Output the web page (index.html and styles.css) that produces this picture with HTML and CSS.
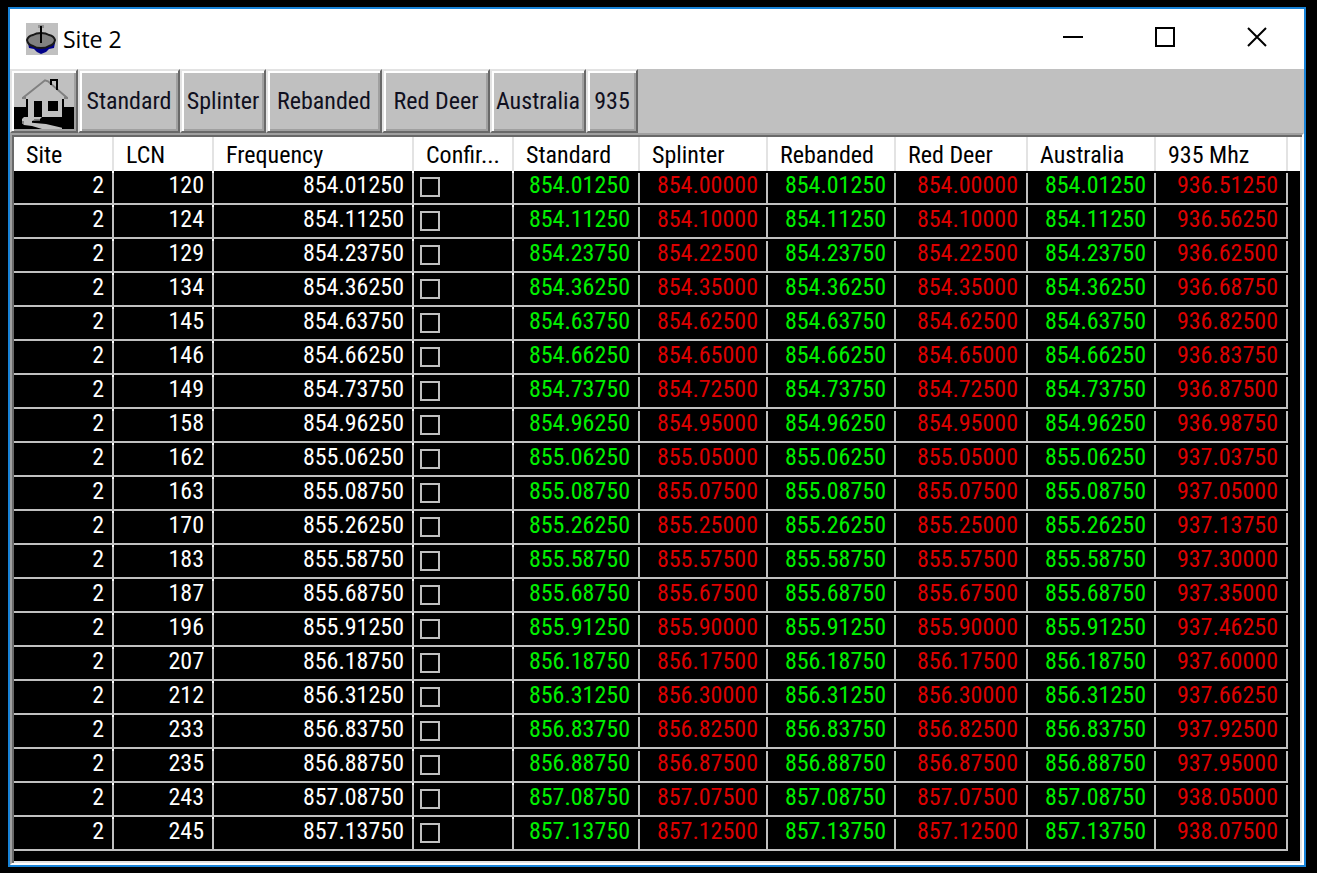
FILE: index.html
```html
<!DOCTYPE html>
<html lang="en">
<head>
<meta charset="utf-8">
<title>Site 2</title>
<link rel="stylesheet" href="styles.css">
</head>
<body>
<main class="window">
  <header class="titlebar">
    <svg class="app-icon" viewBox="0 0 32 32" aria-hidden="true">
      <rect width="32" height="32" fill="#c0c0c0"/>
      <path d="M2 20h27l-1 5-5 1-3 3-5 2-4-2-3-3-5-1z" fill="#000088"/>
      <path d="M1 17Q2 13 7 12q3-2 8-2t8 2q5 1 6 5-1 5-6 6-3 2-8 2t-8-2q-5-1-6-6z" fill="#808080" stroke="#181818" stroke-width="2"/>
      <path d="M12 2h6v3h-6z" fill="#909090"/>
      <path d="M15 3v17" stroke="#000" stroke-width="2"/>
    </svg>
    <h1 class="title">Site 2</h1>
    <div class="controls">
      <button class="control" aria-label="Minimize"><svg viewBox="0 0 20 20"><path d="M0 10h20"/></svg></button>
      <button class="control" aria-label="Maximize"><svg viewBox="0 0 20 20"><path d="M1 1h18v18H1z"/></svg></button>
      <button class="control" aria-label="Close"><svg viewBox="0 0 20 20"><path d="M1 1l18 18M19 1L1 19"/></svg></button>
    </div>
  </header>
  <nav class="toolbar" aria-label="Band plans">
    <button class="tool tool-home" aria-label="Home">
      <svg viewBox="0 0 180 168">
        <rect width="180" height="168" fill="#c0c0c0"/>
        <path d="M0 102h180v66H0z"/>
        <path d="M42 72L96 24l48 48v60H42z" fill="#c0c0c0"/>
        <path d="M36 78h6v24h-6zM144 78h6v24h-6zM60 84h24v48H60zM102 84h30v30h-30z"/>
        <path d="M27 74L93 22l9 3 57 49" fill="none" stroke="#808080" stroke-width="6"/>
        <path d="M24 72h12v6H24zM150 72h12v6h-12z" fill="#808080"/>
        <path d="M111 36V21h18v30" fill="none" stroke="#000" stroke-width="6"/>
        <path d="M30 132h54l-6 6-24 6v5l42 4 48 11v4h-60l-30-9-24-3-6-6v-12z" fill="#c0c0c0"/>
        <path d="M24 144h6v8h-6zM60 138h18v5H60z" fill="#808080"/>
      </svg>
    </button>
    <button class="tool w102">Standard</button>
    <button class="tool w86">Splinter</button>
    <button class="tool w116">Rebanded</button>
    <button class="tool w108">Red Deer</button>
    <button class="tool w96">Australia</button>
    <button class="tool w52">935</button>
  </nav>
  <section class="list">
    <table class="grid">
      <colgroup><col class="w100"><col class="w100"><col class="w200"><col class="w100"><col class="w126"><col class="w128"><col class="w128"><col class="w132"><col class="w128"><col class="w132"><col></colgroup>
      <thead><tr><th>Site</th><th>LCN</th><th>Frequency</th><th>Confir...</th><th>Standard</th><th>Splinter</th><th>Rebanded</th><th>Red Deer</th><th>Australia</th><th>935 Mhz</th><td class="rest"></td></tr></thead>
      <tbody id="rows"></tbody>
    </table>
  </section>
</main>
<script src="script.js"></script>
</body>
</html>
```
FILE: styles.css
```css
* { box-sizing: border-box; }
body {
  margin: 0;
  min-height: 100vh;
  padding: 7px 11px 6px 8px;
  display: flex;
  background: #000;
  font-family: "Roboto Condensed", Roboto, "Liberation Sans", sans-serif;
  font-size: 24px;
  line-height: 28px;
  color: #000;
}
.window {
  flex: 1;
  display: flex;
  flex-direction: column;
  border: 2px solid #1883d7;
  background: #c0c0c0;
}
.titlebar {
  display: flex;
  align-items: center;
  height: 60px;
  padding-left: 16px;
  background: #fff;
}
.app-icon { width: 32px; height: 32px; }
.title {
  margin: 0 auto 0 5px;
  font: 400 23px/32px "Open Sans", "Noto Sans", sans-serif;
}
.controls { display: flex; padding: 0 1px 4px 0; }
.control {
  width: 92px;
  height: 56px;
  padding: 0;
  border: 0;
  background: none;
}
.control svg {
  display: block;
  width: 20px;
  height: 20px;
  margin: auto;
  fill: none;
  stroke: #000;
  stroke-width: 2;
}
.toolbar { display: flex; height: 64px; }
.tool {
  padding: 0;
  border: 2px solid;
  border-color: #e3e3e3 #696969 #696969 #e3e3e3;
  background: #c0c0c0;
  box-shadow: inset 2px 2px #fff, inset -2px -2px #a0a0a0;
  font: inherit;
  color: #101020;
}
.tool-home { padding: 2px; }
.tool-home svg { display: block; width: 60px; height: 56px; }
.w52 { width: 52px; }
.w86 { width: 86px; }
.w96 { width: 96px; }
.w102 { width: 102px; }
.w108 { width: 108px; }
.w116 { width: 116px; }
.list {
  flex: 1;
  border: 2px solid;
  border-color: #a0a0a0 #fff #fff #a0a0a0;
  background: #000;
  box-shadow: inset 2px 2px #696969, inset -2px -2px #e3e3e3;
  padding: 2px;
}
.grid {
  width: 100%;
  table-layout: fixed;
  border-collapse: separate;
  border-spacing: 0;
}
.w100 { width: 100px; }
.w126 { width: 126px; }
.w128 { width: 128px; }
.w132 { width: 132px; }
.w200 { width: 200px; }
.grid th {
  height: 34px;
  padding: 2px 0 0 12px;
  border-right: 2px solid #e3e3e3;
  background: #fff;
  font-weight: 400;
  text-align: left;
  white-space: nowrap;
}
.grid .rest { background: #fff; padding: 0; }
.cell {
  height: 34px;
  padding: 0 10px 4px 0;
  border-bottom: 2px solid #c0c0c0;
  background: linear-gradient(#fff 2px, #c0c0c0 2px) right / 2px 100% no-repeat;
  color: #fff;
  text-align: right;
}
.cell.match, .cell.miss { background-image: linear-gradient(#000 2px, #c0c0c0 2px); }
.cell.match { color: #00f000; }
.cell.miss { color: #dc0000; }
.cell.confirm { padding: 0 0 0 6px; text-align: left; }
.check {
  display: block;
  appearance: none;
  width: 20px;
  height: 20px;
  margin: 0;
  border: 2px solid #c0c0c0;
  background: #000;
}
```
FILE: script.js
```js
// LCN, current frequency, splinter frequency, 935 MHz frequency
const channels = `120 854.01250 854.00000 936.51250
124 854.11250 854.10000 936.56250
129 854.23750 854.22500 936.62500
134 854.36250 854.35000 936.68750
145 854.63750 854.62500 936.82500
146 854.66250 854.65000 936.83750
149 854.73750 854.72500 936.87500
158 854.96250 854.95000 936.98750
162 855.06250 855.05000 937.03750
163 855.08750 855.07500 937.05000
170 855.26250 855.25000 937.13750
183 855.58750 855.57500 937.30000
187 855.68750 855.67500 937.35000
196 855.91250 855.90000 937.46250
207 856.18750 856.17500 937.60000
212 856.31250 856.30000 937.66250
233 856.83750 856.82500 937.92500
235 856.88750 856.87500 937.95000
243 857.08750 857.07500 938.05000
245 857.13750 857.12500 938.07500`;

document.getElementById("rows").innerHTML = channels.split("\n").map(line => {
  const [lcn, freq, splinter, mhz935] = line.split(" ");
  const plain = text => `<td class="cell">${text}</td>`;
  const plan = text => `<td class="cell ${text === freq ? "match" : "miss"}">${text}</td>`;
  return `<tr>${plain(2)}${plain(lcn)}${plain(freq)}
    <td class="cell confirm"><input class="check" type="checkbox" aria-label="Confirm LCN ${lcn}"></td>
    ${[freq, splinter, freq, splinter, freq, mhz935].map(plan).join("")}</tr>`;
}).join("");
```
